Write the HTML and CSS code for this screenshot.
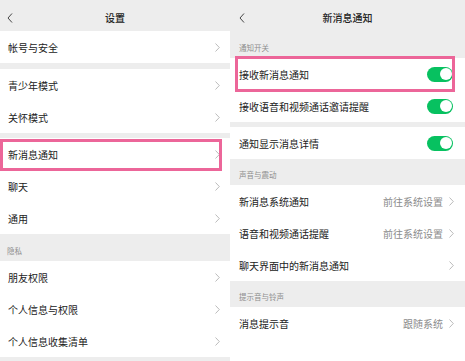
FILE: index.html
```html
<!DOCTYPE html>
<html>
<head>
    <title>设置 / 新消息通知</title>
    <link rel="stylesheet" href="styles.css">
</head>
<body>
    <div class="screens">

        <div class="panel panel-left">
            <div class="header">
                <svg class="back" width="6" height="10" viewBox="0 0 6 10"><path d="M5 0.5 L1 5 L5 9.5" fill="none" stroke="#333" stroke-width="0.9"/></svg>
                <span class="title">设置</span>
            </div>

            <div class="row"><span class="label">帐号与安全</span><svg class="chevron" width="5" height="9" viewBox="0 0 5 9"><path d="M0.5 0.5 L4.3 4.5 L0.5 8.5"/></svg></div>
            <div class="gap gap-6"></div>
            <div class="row"><span class="label">青少年模式</span><svg class="chevron" width="5" height="9" viewBox="0 0 5 9"><path d="M0.5 0.5 L4.3 4.5 L0.5 8.5"/></svg></div>
            <div class="row"><span class="label">关怀模式</span><svg class="chevron" width="5" height="9" viewBox="0 0 5 9"><path d="M0.5 0.5 L4.3 4.5 L0.5 8.5"/></svg></div>
            <div class="gap"></div>
            <div class="row highlight highlight-left"><span class="label">新消息通知</span><svg class="chevron" width="5" height="9" viewBox="0 0 5 9"><path d="M0.5 0.5 L4.3 4.5 L0.5 8.5"/></svg></div>
            <div class="row"><span class="label">聊天</span><svg class="chevron" width="5" height="9" viewBox="0 0 5 9"><path d="M0.5 0.5 L4.3 4.5 L0.5 8.5"/></svg></div>
            <div class="row"><span class="label">通用</span><svg class="chevron" width="5" height="9" viewBox="0 0 5 9"><path d="M0.5 0.5 L4.3 4.5 L0.5 8.5"/></svg></div>
            <div class="section section-left">隐私</div>
            <div class="row"><span class="label">朋友权限</span><svg class="chevron" width="5" height="9" viewBox="0 0 5 9"><path d="M0.5 0.5 L4.3 4.5 L0.5 8.5"/></svg></div>
            <div class="row"><span class="label">个人信息与权限</span><svg class="chevron" width="5" height="9" viewBox="0 0 5 9"><path d="M0.5 0.5 L4.3 4.5 L0.5 8.5"/></svg></div>
            <div class="row"><span class="label">个人信息收集清单</span><svg class="chevron" width="5" height="9" viewBox="0 0 5 9"><path d="M0.5 0.5 L4.3 4.5 L0.5 8.5"/></svg></div>
        </div>

        <div class="panel panel-right">
            <div class="header">
                <svg class="back" width="6" height="10" viewBox="0 0 6 10"><path d="M5 0.5 L1 5 L5 9.5" fill="none" stroke="#333" stroke-width="0.9"/></svg>
                <span class="title">新消息通知</span>
            </div>

            <div class="section">通知开关</div>
            <div class="row highlight highlight-right"><span class="label">接收新消息通知</span><span class="switch"></span></div>
            <div class="row"><span class="label">接收语音和视频通话邀请提醒</span><span class="switch"></span></div>
            <div class="gap"></div>
            <div class="row"><span class="label">通知显示消息详情</span><span class="switch"></span></div>
            <div class="section section-sm">声音与震动</div>
            <div class="row"><span class="label">新消息系统通知</span><span class="value">前往系统设置</span><svg class="chevron" width="5" height="9" viewBox="0 0 5 9"><path d="M0.5 0.5 L4.3 4.5 L0.5 8.5"/></svg></div>
            <div class="row"><span class="label">语音和视频通话提醒</span><span class="value">前往系统设置</span><svg class="chevron" width="5" height="9" viewBox="0 0 5 9"><path d="M0.5 0.5 L4.3 4.5 L0.5 8.5"/></svg></div>
            <div class="row"><span class="label">聊天界面中的新消息通知</span><svg class="chevron" width="5" height="9" viewBox="0 0 5 9"><path d="M0.5 0.5 L4.3 4.5 L0.5 8.5"/></svg></div>
            <div class="section section-sm">提示音与铃声</div>
            <div class="row"><span class="label">消息提示音</span><span class="value">跟随系统</span><svg class="chevron" width="5" height="9" viewBox="0 0 5 9"><path d="M0.5 0.5 L4.3 4.5 L0.5 8.5"/></svg></div>
            <div class="rest"></div>
        </div>

    </div>
</body>
</html>
```

FILE: styles.css
```css
body {
    margin: 0;
    background-color: #ffffff;
    font-family: "Noto Sans CJK SC", "Noto Sans", sans-serif;
    color: #222222;
}

.screens {
    display: flex;
    width: 465px;
    height: 361px;
    overflow: hidden;
}

.panel {
    display: flex;
    flex-direction: column;
    background-color: #ededed;
}

.panel-left {
    width: 230px;
}

.panel-right {
    width: 235px;
}

.header {
    height: 31px;
    flex-shrink: 0;
    position: relative;
    display: flex;
    align-items: center;
    justify-content: center;
    padding-top: 3px;
    box-sizing: border-box;
}

.back {
    position: absolute;
    left: 7px;
    top: 13px;
}

.panel-right .back {
    left: 9px;
}

.title {
    font-size: 10px;
    font-weight: 500;
}

.row {
    height: 32px;
    flex-shrink: 0;
    display: flex;
    align-items: center;
    background-color: #ffffff;
    padding: 0 10px 0 8px;
    font-size: 10px;
}

.panel-right .row {
    padding: 0 12px 0 9px;
}

.label {
    flex-grow: 1;
}

.value {
    color: #8c8c8c;
    margin-right: 6px;
}

.chevron {
    fill: none;
    stroke: #b3b3b3;
    stroke-width: 0.9;
}

.panel-right .chevron {
    margin-right: -1px;
}

.gap {
    height: 5px;
    flex-shrink: 0;
}

.gap-6 {
    height: 6px;
}

.section {
    height: 27px;
    flex-shrink: 0;
    display: flex;
    align-items: flex-end;
    padding: 0 0 5px 9px;
    box-sizing: border-box;
    font-size: 7.5px;
    color: #8e8e8e;
}

.section-left {
    padding-left: 7px;
}

.section-sm {
    height: 26px;
}

.switch {
    width: 26px;
    height: 15px;
    border-radius: 8px;
    background-color: #07c160;
    position: relative;
}

.switch::after {
    content: "";
    position: absolute;
    right: 1.5px;
    top: 1.5px;
    width: 12px;
    height: 12px;
    border-radius: 50%;
    background-color: #ffffff;
}

.highlight {
    position: relative;
}

.highlight::after {
    content: "";
    position: absolute;
    border: 3px solid #ec6699;
}

.highlight-left::after {
    left: 0;
    right: 8px;
    top: 1px;
    bottom: -1px;
}

.highlight-right::after {
    left: 5px;
    right: 10px;
    top: -2px;
    bottom: -2px;
}

.rest {
    flex-grow: 1;
    background-color: #ffffff;
}
```
